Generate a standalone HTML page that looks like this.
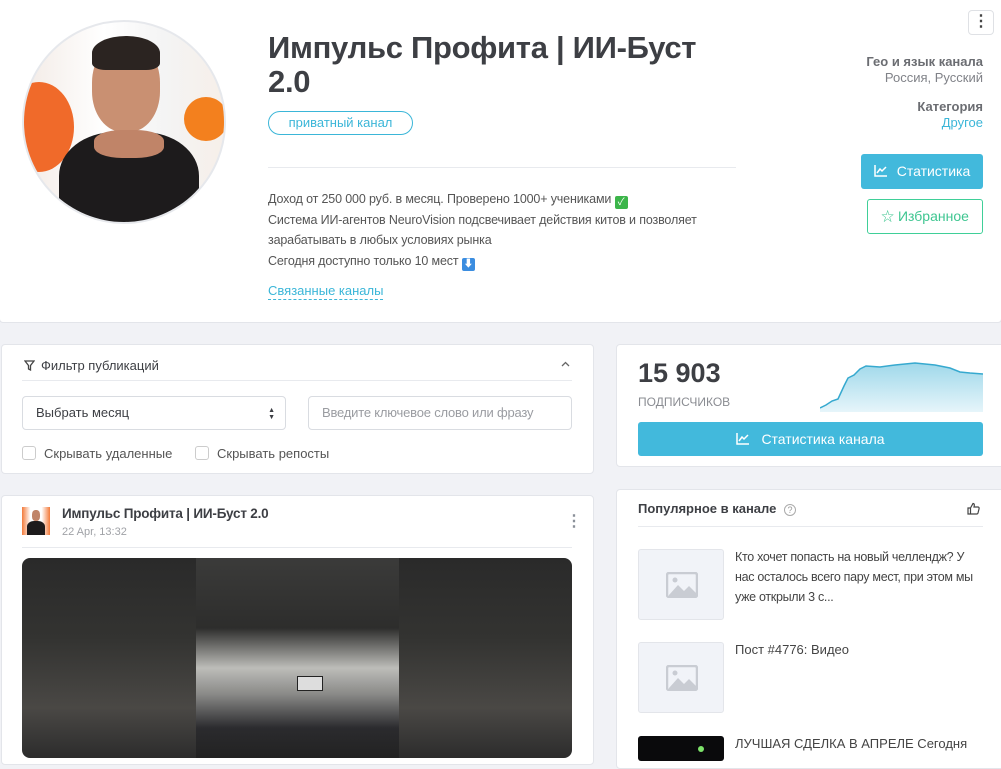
<!DOCTYPE html>
<html><head><meta charset="utf-8"><style>
*{box-sizing:border-box;margin:0;padding:0}
body{width:1001px;height:755px;overflow:hidden;background:#f1f2f6;font-family:"Liberation Sans","Noto Sans CJK SC",sans-serif;color:#4a4a4a;position:relative}
.card{position:absolute;background:#fff;border:1px solid #e3e5ea;border-radius:4px}
.abs{position:absolute}
</style></head><body>
<div class="card" style="left:-1px;top:-2px;width:1003px;height:325px;border-radius:0 0 4px 4px"></div>
<div class="abs" style="left:22px;top:20px;width:204px;height:204px;border-radius:50%;border:2px solid #e6e8ec;overflow:hidden;background:linear-gradient(90deg,#f3ebe6 0%,#fff 40%,#f4f4f4 70%,#f6efe9 100%)">
 <div class="abs" style="left:-20px;top:60px;width:70px;height:90px;border-radius:50%;background:#f06a2a"></div>
 <div class="abs" style="left:160px;top:75px;width:44px;height:44px;border-radius:50%;background:#f3801e"></div>
 <div class="abs" style="left:68px;top:20px;width:68px;height:90px;border-radius:45%;background:#c99072"></div>
 <div class="abs" style="left:68px;top:14px;width:68px;height:34px;border-radius:50% 50% 20% 20%;background:#2b2421"></div>
 <div class="abs" style="left:35px;top:110px;width:140px;height:110px;border-radius:40% 40% 0 0;background:#1d1b1c"></div>
 <div class="abs" style="left:70px;top:108px;width:70px;height:28px;border-radius:40%;background:#c08468"></div>
</div>
<div class="abs" style="left:268px;top:31px;font-size:31px;font-weight:bold;color:#3d3f44;line-height:34px;width:470px;letter-spacing:-0.3px">Импульс Профита | ИИ-Буст 2.0</div>
<div class="abs" style="left:268px;top:111px;width:145px;height:24px;border:1px solid #3bb6d8;border-radius:12px;color:#3bb6d8;font-size:13px;text-align:center;line-height:22px">приватный канал</div>
<div class="abs" style="left:268px;top:167px;width:468px;border-top:1px solid #e8eaee"></div>
<div class="abs" style="left:268px;top:189px;font-size:12.5px;line-height:20.5px;color:#555;width:470px;letter-spacing:-0.15px">Доход от 250 000 руб. в месяц. Проверено 1000+ учениками <span style="display:inline-block;width:13px;height:13px;background:#3cb54a;border-radius:2px;color:#fff;font-size:10px;text-align:center;line-height:13px;vertical-align:-2px">✓</span><br>Система ИИ-агентов NeuroVision подсвечивает действия китов и позволяет зарабатывать в любых условиях рынка<br>Сегодня доступно только 10 мест <span style="display:inline-block;width:13px;height:13px;background:#3b8de0;border-radius:2px;color:#fff;font-size:10px;text-align:center;line-height:13px;vertical-align:-2px">⬇</span></div>
<div class="abs" style="left:268px;top:283px;font-size:13px;color:#3bb6d8;border-bottom:1px dashed #3bb6d8;padding-bottom:1px">Связанные каналы</div>
<div class="abs" style="left:968px;top:10px;width:26px;height:25px;border:1px solid #dfe1e5;border-radius:4px;text-align:center;font-size:16px;line-height:22px;font-weight:bold;color:#444">⋮</div>
<div class="abs" style="right:18px;top:54px;text-align:right;font-size:13px;line-height:16px"><b style="color:#6b6d72">Гео и язык канала</b><br><span style="color:#808288">Россия, Русский</span></div>
<div class="abs" style="right:18px;top:99px;text-align:right;font-size:13px;line-height:16px"><b style="color:#6b6d72">Категория</b><br><span style="color:#3bb6d8">Другое</span></div>
<div class="abs" style="left:861px;top:154px;width:122px;height:35px;background:#42b9dc;border-radius:3px;color:#fff;font-size:14px;line-height:35px;text-align:center"><svg width="13" height="12" style="margin-right:10px;vertical-align:-1px"><path d="M1,0 V11 H13 M3,8 L6,4 L8,6 L12,2" fill="none" stroke="#fff" stroke-width="1.5"/></svg>Статистика</div>
<div class="abs" style="left:867px;top:199px;width:116px;height:35px;border:1px solid #3fcf98;border-radius:3px;color:#3fc691;font-size:14px;line-height:33px;text-align:center"><span style="font-size:13px">☆</span> Избранное</div>

<div class="card" style="left:1px;top:344px;width:593px;height:130px"></div>
<div class="abs" style="left:24px;top:358px;font-size:13px;color:#3d3f44"><svg width="11" height="11" style="margin-right:6px;vertical-align:-1px"><path d="M1,1 H10 L6.5,5.5 V10 L4.5,9 V5.5Z" fill="none" stroke="#444" stroke-width="1.3"/></svg>Фильтр публикаций</div>
<svg class="abs" style="left:561px;top:361px" width="9" height="6"><path d="M1,5 L4.5,1.5 L8,5" fill="none" stroke="#666" stroke-width="1.3"/></svg>
<div class="abs" style="left:22px;top:380px;width:550px;border-top:1px solid #e8eaee"></div>
<div class="abs" style="left:22px;top:396px;width:264px;height:34px;border:1px solid #d9dce1;border-radius:4px;font-size:13px;line-height:32px;padding-left:13px;color:#3d3f44">Выбрать месяц<span style="position:absolute;right:10px;top:0;font-size:7px;line-height:7px;padding-top:10px;text-align:center">▲<br>▼</span></div>
<div class="abs" style="left:308px;top:396px;width:264px;height:34px;border:1px solid #d9dce1;border-radius:4px;font-size:13px;line-height:32px;padding-left:13px;color:#9a9ca1;letter-spacing:-0.2px">Введите ключевое слово или фразу</div>
<div class="abs" style="left:22px;top:446px;font-size:13px;color:#555"><span style="display:inline-block;width:14px;height:14px;border:1px solid #ccc;border-radius:3px;vertical-align:-2px;margin-right:8px"></span>Скрывать удаленные</div>
<div class="abs" style="left:195px;top:446px;font-size:13px;color:#555"><span style="display:inline-block;width:14px;height:14px;border:1px solid #ccc;border-radius:3px;vertical-align:-2px;margin-right:8px"></span>Скрывать репосты</div>

<div class="card" style="left:1px;top:495px;width:593px;height:270px"></div>
<div class="abs" style="left:22px;top:507px;width:28px;height:28px;background:linear-gradient(90deg,#f37a3a,#fff 30%,#fff 70%,#f37a3a);overflow:hidden"><div class="abs" style="left:5px;top:14px;width:18px;height:14px;background:#1d1b1c;border-radius:40% 40% 0 0"></div><div class="abs" style="left:10px;top:3px;width:8px;height:11px;background:#c08468;border-radius:40%"></div></div>
<div class="abs" style="left:62px;top:506px;font-size:13.5px;font-weight:bold;color:#3d3f44;letter-spacing:-0.2px">Импульс Профита | ИИ-Буст 2.0</div>
<div class="abs" style="left:62px;top:526px;font-size:11px;color:#a0a2a7">22 Apr, 13:32</div>
<div class="abs" style="left:566px;top:511px;font-size:16px;color:#8a9099;font-weight:bold">⋮</div>
<div class="abs" style="left:22px;top:547px;width:550px;border-top:1px solid #e8eaee"></div>
<div class="abs" style="left:22px;top:558px;width:550px;height:200px;border-radius:8px;overflow:hidden;background:linear-gradient(180deg,#2a2a2a,#333331 40%,#4a4845 75%,#2c2c2c)">
 <div class="abs" style="left:174px;top:0;width:203px;height:200px;background:linear-gradient(180deg,#3b3b3a 0%,#2d2d2c 35%,#bdbdb9 55%,#8a8a88 68%,#2b2b2e 85%,#222 100%)"></div>
 <div class="abs" style="left:275px;top:118px;width:26px;height:15px;background:#ddd;border:1px solid #222"></div>
</div>

<div class="card" style="left:616px;top:344px;width:390px;height:123px"></div>
<div class="abs" style="left:638px;top:358px;font-size:27px;font-weight:bold;color:#3d3f44">15 903</div>
<div class="abs" style="left:638px;top:395px;font-size:12px;color:#8a8c92">ПОДПИСЧИКОВ</div>
<svg class="abs" style="left:820px;top:362px" width="163" height="50"><defs><linearGradient id="g" x1="0" y1="0" x2="0" y2="1"><stop offset="0" stop-color="#9fd8ea"/><stop offset="1" stop-color="#e6f5fa"/></linearGradient></defs><path d="M0,46 L6,43 L12,39 L18,37 L24,24 L28,16 L34,13 L40,7 L46,4 L60,5 L75,3 L95,1 L115,3 L130,6 L140,10 L150,11 L163,12 L163,50 L0,50Z" fill="url(#g)"/><path d="M0,46 L6,43 L12,39 L18,37 L24,24 L28,16 L34,13 L40,7 L46,4 L60,5 L75,3 L95,1 L115,3 L130,6 L140,10 L150,11 L163,12" fill="none" stroke="#36a9cf" stroke-width="1.5"/></svg>
<div class="abs" style="left:638px;top:422px;width:345px;height:34px;background:#42b9dc;border-radius:3px;color:#fff;font-size:14px;line-height:34px;text-align:center"><svg width="13" height="12" style="margin-right:12px;vertical-align:-1px"><path d="M1,0 V11 H13 M3,8 L6,4 L8,6 L12,2" fill="none" stroke="#fff" stroke-width="1.5"/></svg>Статистика канала</div>

<div class="card" style="left:616px;top:489px;width:390px;height:280px"></div>
<div class="abs" style="left:638px;top:501px;font-size:13px;font-weight:bold;color:#3d3f44">Популярное в канале <span style="font-weight:normal;font-size:9px;color:#999;border:1px solid #aaa;border-radius:50%;display:inline-block;width:12px;height:12px;text-align:center;line-height:11px;margin-left:4px">?</span></div>
<svg class="abs" style="left:967px;top:502px" width="13" height="13"><path d="M1,6 H3.5 V12 H1Z M3.5,6 L6,1.5 C7.5,1.5 7.5,3 7,5 H11 C12,5 12.3,6 12,7 L11,11 C10.8,11.7 10.3,12 9.6,12 H3.5" fill="none" stroke="#444" stroke-width="1.2"/></svg>
<div class="abs" style="left:638px;top:526px;width:345px;border-top:1px solid #e8eaee"></div>
<div class="abs" style="left:638px;top:549px;width:86px;height:71px;background:#f1f3f8;border:1px solid #e3e5ea;border-radius:3px"><svg class="abs" style="left:27px;top:22px" width="32" height="26"><rect x="1" y="1" width="30" height="24" rx="2" fill="none" stroke="#c9ccd3" stroke-width="2.5"/><circle cx="9" cy="8" r="2.5" fill="#c9ccd3"/><path d="M3,23 L12,13 L18,19 L23,14 L30,21 L30,24 L3,24Z" fill="#c9ccd3"/></svg></div>
<div class="abs" style="left:735px;top:547px;width:250px;font-size:12.5px;line-height:20px;color:#444;letter-spacing:-0.3px">Кто хочет попасть на новый челлендж? У нас осталось всего пару мест, при этом мы уже открыли 3 с...</div>
<div class="abs" style="left:638px;top:642px;width:86px;height:71px;background:#f1f3f8;border:1px solid #e3e5ea;border-radius:3px"><svg class="abs" style="left:27px;top:22px" width="32" height="26"><rect x="1" y="1" width="30" height="24" rx="2" fill="none" stroke="#c9ccd3" stroke-width="2.5"/><circle cx="9" cy="8" r="2.5" fill="#c9ccd3"/><path d="M3,23 L12,13 L18,19 L23,14 L30,21 L30,24 L3,24Z" fill="#c9ccd3"/></svg></div>
<div class="abs" style="left:735px;top:642px;font-size:13px;color:#444">Пост #4776: Видео</div>
<div class="abs" style="left:638px;top:736px;width:86px;height:25px;background:#0a0a0c;border-radius:3px"><div class="abs" style="left:60px;top:10px;width:6px;height:6px;border-radius:50%;background:#7de36a"></div></div>
<div class="abs" style="left:735px;top:736px;font-size:13px;color:#444">ЛУЧШАЯ СДЕЛКА В АПРЕЛЕ Сегодня</div>
</body></html>
